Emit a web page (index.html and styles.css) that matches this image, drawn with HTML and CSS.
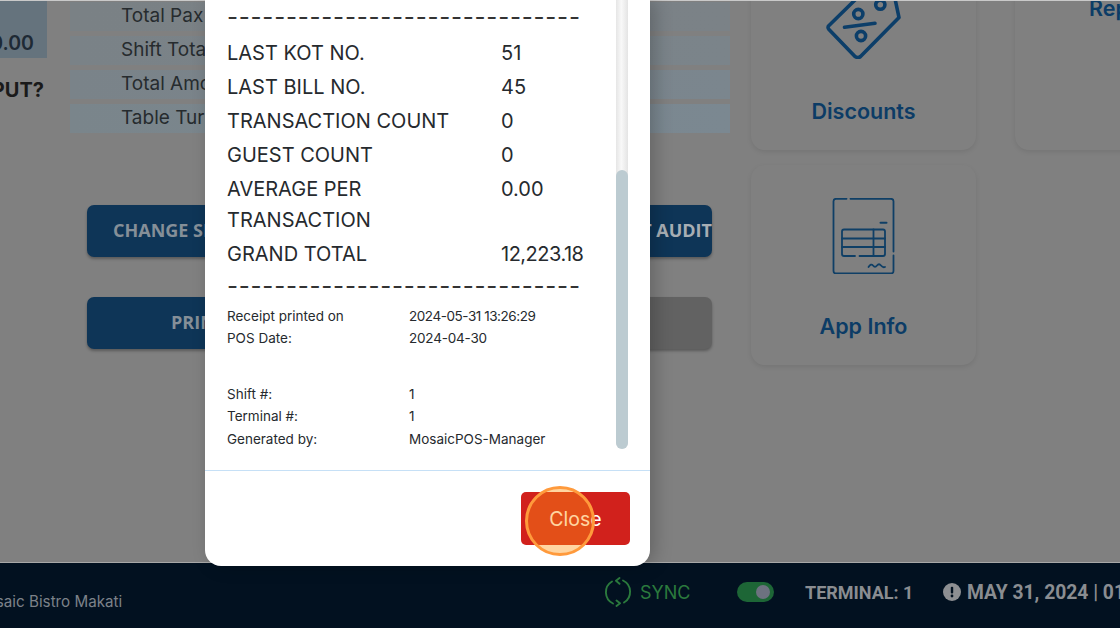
FILE: index.html
```html
<!DOCTYPE html>
<html lang="en">
<head>
<meta charset="utf-8">
<title>Mosaic POS</title>
<link rel="stylesheet" href="styles.css">
</head>
<body>
<div class="app">
  <main class="main">
    <section class="left">
      <div class="summary">
        <div class="stat-col">
          <div class="stat"><span>0.00</span></div>
          <div class="question">PUT?</div>
        </div>
        <div class="rows">
          <div class="row r1">Total Pax</div>
          <div class="row r2">Shift Total</div>
          <div class="row r3">Total Amount</div>
          <div class="row r4">Table Turn</div>
        </div>
      </div>
      <div class="actions">
        <button class="btn btn-start">CHANGE SHIFT</button>
        <button class="btn btn-end">SHIFT AUDIT</button>
        <button class="btn btn-print">PRINT</button>
        <button class="btn btn-grey"></button>
      </div>
    </section>
    <section class="cards">
      <div class="card">
        <svg class="icon" viewBox="825 -17 76 76" width="76" height="76" fill="none" stroke="#0c3e69" stroke-width="3.6" stroke-linejoin="round" stroke-linecap="round">
          <path d="M828 25.500 L853 1 M828 29.500 Q826 27 828 25.500 M828 29.500 L854 56.500 Q857 58.500 859.500 56.500 L898 17.500 L893 -6 L866 -12 L853 1"/>
          <circle cx="857.300" cy="14" r="4.600"/>
          <circle cx="879.300" cy="4.700" r="4.600"/>
          <circle cx="860" cy="36" r="4.600"/>
          <path d="M843.500 27.300 L874 23.300"/>
        </svg>
        <div class="card-label">Discounts</div>
      </div>
      <div class="card card-top">
        <div class="card-label">Reports</div>
      </div>
      <div class="card">
        <svg class="icon" viewBox="832 198 63 76" width="63" height="76" fill="none" stroke="#0f3f66" stroke-width="1.800" stroke-linecap="round" stroke-linejoin="round">
          <path d="M846.500 198.800 H836 Q833.500 198.800 833.500 201.300 V271 Q833.500 273.500 836 273.500 H891 Q893.500 273.500 893.500 271 V255.500 M893.500 251.500 V201.300 Q893.500 198.800 891 198.800 H850.500"/>
          <path d="M880.500 222.800 H886.500" stroke-width="2"/>
          <path d="M855 256 H844 Q842 256 842 254 V231.500 Q842 229.500 844 229.500 H883 Q885 229.500 885 231.500 V254 Q885 256 883 256 H859.500"/>
          <path d="M842 238.500 H885 M842 247 H885 M873.500 229.500 V256"/>
          <path d="M868.500 267 Q871 263 873 265.500 Q875 268 877 265.500 Q879 263 881 265.500 Q883 268 885 267"/>
        </svg>
        <div class="card-label">App Info</div>
      </div>
    </section>
  </main>
  <footer class="footer">
    <div class="venue">Mosaic Bistro Makati</div>
    <div class="status">
      <div class="sync">
        <svg viewBox="0 0 28 30" width="28" height="30" fill="none" stroke="#2b7a3d" stroke-width="1.900" stroke-linecap="round" stroke-linejoin="round">
          <path d="M8 4.500 A12.500 12.500 0 0 0 9 26.500"/>
          <path d="M20 25.500 A12.500 12.500 0 0 0 19 3.500"/>
          <path d="M15.500 1 L12 3.800 L15.500 6.800"/>
          <path d="M12.500 23.500 L16 26.300 L12.500 29"/>
        </svg>
        <span>SYNC</span>
      </div>
      <div class="toggle"><span class="knob"></span></div>
      <div class="terminal">TERMINAL: 1</div>
      <div class="datetime">
        <svg viewBox="0 0 18 18" width="18" height="18"><circle cx="9" cy="9" r="9" fill="#8d8f92"/><rect x="7.800" y="3.800" width="2.400" height="6.800" rx="1" fill="#021120"/><circle cx="9" cy="13" r="1.400" fill="#021120"/></svg>
        <span>MAY 31, 2024 | 01:26 PM</span>
      </div>
    </div>
  </footer>
</div>
<div class="modal">
  <div class="modal-body">
    <div class="receipt">
      <div class="dashes dashes-top">------------------------------</div>
      <div class="line"><span>LAST KOT NO.</span><span>51</span></div>
      <div class="line"><span>LAST BILL NO.</span><span>45</span></div>
      <div class="line"><span>TRANSACTION COUNT</span><span>0</span></div>
      <div class="line"><span>GUEST COUNT</span><span>0</span></div>
      <div class="line"><span>AVERAGE PER<br>TRANSACTION</span><span>0.00</span></div>
      <div class="line"><span>GRAND TOTAL</span><span class="total">12,223.18</span></div>
      <div class="dashes dashes-bottom">------------------------------</div>
      <div class="meta">
        <span>Receipt printed on</span><span class="stamp">2024-05-31 13:26:29</span>
        <span>POS Date:</span><span class="date">2024-04-30</span>
        <span class="blank"></span><span class="blank"></span>
        <span>Shift #:</span><span>1</span>
        <span>Terminal #:</span><span>1</span>
        <span>Generated by:</span><span>MosaicPOS-Manager</span>
      </div>
    </div>
    <div class="scrollbar"><div class="thumb"></div></div>
  </div>
  <div class="modal-footer">
    <button class="close">Close</button>
  </div>
  <div class="highlight"></div>
</div>
</body>
</html>
```
FILE: styles.css
```css
* { box-sizing: border-box; }
html, body { margin: 0; padding: 0; }
body {
  position: relative;
  width: 1120px;
  height: 628px;
  overflow: hidden;
  background: #808080;
  font-family: "Inter", "Noto Sans", sans-serif;
}
.app { display: flex; flex-direction: column; height: 628px; }
.main {
  flex: 1;
  min-height: 0;
  display: flex;
  overflow: hidden;
  border-top: 1px solid #c9c9c9;
  border-bottom: 1px solid #a8a8a8;
}
.left { width: 751px; flex: none; }
.summary { display: flex; gap: 23px; height: 204px; }
.stat-col { width: 47px; flex: none; }
.stat {
  height: 57px;
  background: #65737d;
  color: #1e2a35;
  font-size: 19.500px;
  font-weight: 600;
  display: flex;
  justify-content: flex-end;
  align-items: flex-end;
  padding: 0 13px 3px 0;
}
.stat span { margin-left: -20px; }
.question {
  margin: 20px 0 0 -20px;
  width: 64px;
  text-align: right;
  color: #1a1a1a;
  font-size: 20px;
  font-weight: 700;
  white-space: nowrap;
}
.rows { width: 660px; display: flex; flex-direction: column; gap: 5px; padding-top: 1px; }
.row {
  height: 29px;
  padding-left: 51px;
  font-size: 19px;
  line-height: 27px;
  color: #262b2e;
}
.r1 { background: linear-gradient(90deg, #7a8185, #7b8287); }
.r2 { background: linear-gradient(90deg, #7a8287, #7b848a); }
.r3 { background: linear-gradient(90deg, #7a8389, #7b868e); }
.r4 { background: linear-gradient(90deg, #7a858b, #7b8891); }
.actions {
  margin-left: 87px;
  width: 625px;
  display: grid;
  grid-template-columns: 1fr 1fr;
  gap: 40px 30px;
}
.btn {
  height: 52px;
  border: 0;
  border-radius: 7px;
  background: #0e3557;
  color: #858f98;
  font-family: "Open Sans", sans-serif;
  font-size: 18px;
  font-weight: 700;
  box-shadow: 0 2px 3px rgba(0,0,0,.3);
  overflow: hidden;
  white-space: nowrap;
  padding: 0 0 2px;
}
.btn-start { text-align: left; padding-left: 26px; }
.btn-end { text-align: right; color: #a7aeb4; }
.btn-print { text-align: left; padding-left: 84px; }
.btn-grey { background: #626262; }
.cards {
  flex: none;
  width: 500px;
  margin-top: -51px;
  display: grid;
  grid-template-columns: 225px 225px;
  grid-auto-rows: 200px;
  gap: 15px 39px;
}
.card {
  background: #808080;
  border-radius: 14px;
  box-shadow: 0 2px 5px rgba(0,0,0,.09);
  display: flex;
  flex-direction: column;
  align-items: center;
  padding-top: 33px;
}
.icon { display: block; flex: none; }
.card-label {
  margin-top: 38px;
  color: #0c3c66;
  font-size: 21.500px;
  line-height: 28px;
  font-weight: 600;
}
.card-top { padding: 0 0 0 4px; }
.card-top .card-label { margin-top: 44px; }
.footer {
  height: 65px;
  flex: none;
  background: #021120;
  display: flex;
  justify-content: space-between;
  overflow: hidden;
}
.venue {
  margin: 29px 0 0 -27px;
  color: #7c8289;
  font-size: 15.200px;
  line-height: 20px;
  white-space: nowrap;
}
.status {
  display: flex;
  align-items: center;
  height: 58px;
  flex: none;
  width: 516px;
  font-family: "Roboto", sans-serif;
}
.sync { flex: none; display: flex; align-items: center; gap: 8px; width: 133px; color: #2b7a3d; font-family: "Inter", sans-serif; font-size: 18px; }
.toggle {
  width: 37px;
  height: 20px;
  border-radius: 10px;
  background: #1d6636;
  position: relative;
  margin-right: 31px;
  flex: none;
}
.knob {
  position: absolute;
  right: 4px;
  top: 3px;
  width: 14px;
  height: 14px;
  border-radius: 50%;
  background: #6d7280;
}
.terminal { flex: none; width: 138px; color: #8a8d91; font-size: 18px; font-weight: 700; white-space: nowrap; }
.datetime { flex: none; display: flex; align-items: center; gap: 6px; color: #8a8d91; font-size: 19.300px; font-weight: 700; white-space: nowrap; }
.modal {
  position: absolute;
  left: 205px;
  top: 0;
  width: 445px;
  height: 566px;
  background: #fff;
  border-radius: 0 0 16px 16px;
  display: flex;
  flex-direction: column;
  box-shadow: 5px 0 18px rgba(0,0,0,.22);
}
.modal-body {
  height: 471px;
  flex: none;
  display: flex;
  justify-content: space-between;
  border-bottom: 1px solid #c6e0f6;
  padding: 0 22px;
}
.receipt { width: 380px; color: #262a2e; }
.dashes {
  font-size: 24px;
  line-height: 34px;
  letter-spacing: .75px;
  white-space: nowrap;
  color: #333;
}
.dashes-top { margin-bottom: 2px; }
.dashes-bottom { margin-top: -2px; }
.line {
  display: grid;
  grid-template-columns: 274px 1fr;
  font-size: 20px;
  line-height: 31px;
  padding: 1.500px 0;
}
.total { letter-spacing: -.5px; }
.meta {
  display: grid;
  grid-template-columns: 182px 1fr;
  font-size: 13.500px;
  line-height: 22.300px;
  padding-top: 2px;
}
.stamp { letter-spacing: -.45px; }
.date { letter-spacing: -.2px; }
.blank { height: 33.500px; }
.scrollbar {
  width: 12px;
  height: 449px;
  background: linear-gradient(90deg, #e6e6e6, #f8f8f8 45%, #e4e4e4);
  border-radius: 0 0 6px 6px;
  display: flex;
  align-items: flex-end;
}
.thumb { width: 12px; height: 279px; background: #bccbd1; border-radius: 6px; }
.modal-footer { display: flex; justify-content: flex-end; padding: 21px 20px 0 0; }
.close {
  width: 109px;
  height: 53px;
  border: 0;
  border-radius: 5px;
  background: #d1211c;
  color: #fff;
  font-family: "Inter", sans-serif;
  font-size: 19.500px;
}
.highlight {
  position: absolute;
  left: 320px;
  top: 486px;
  width: 70px;
  height: 70px;
  border-radius: 50%;
  background: rgba(255,150,20,.4);
  border: 3px solid #ff9a3c;
}
```
